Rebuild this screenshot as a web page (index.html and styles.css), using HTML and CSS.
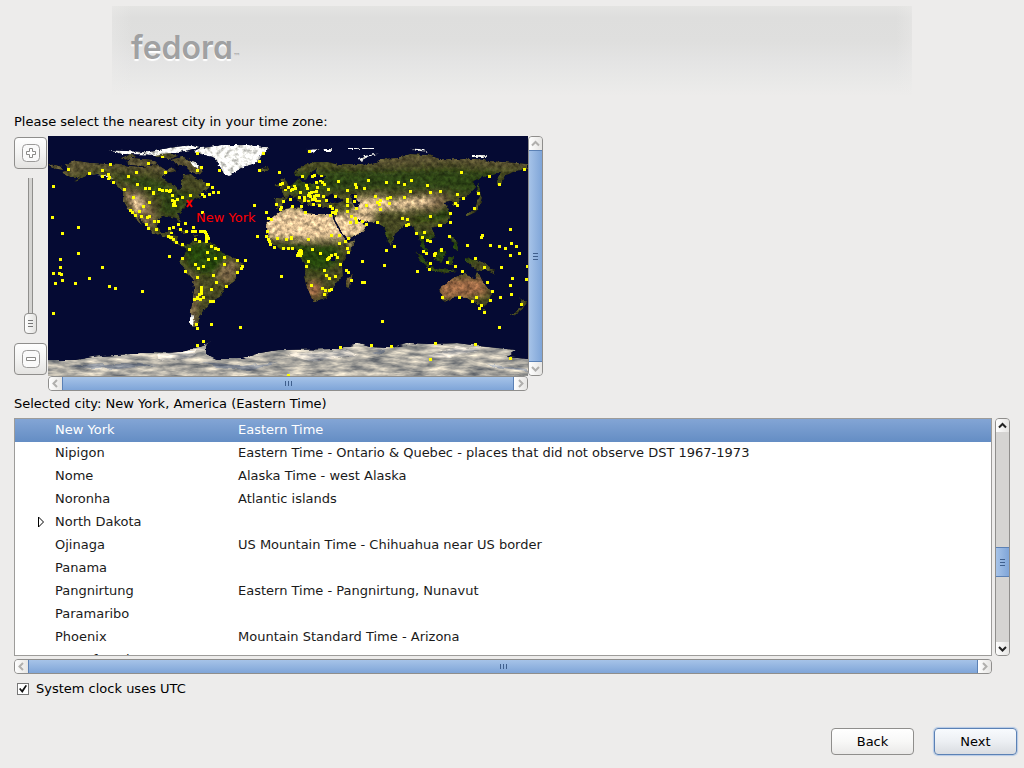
FILE: index.html
```
<!DOCTYPE html>
<html lang="en">
<head>
<meta charset="utf-8">
<title>Time zone selection</title>
<link rel="stylesheet" href="styles.css">
</head>
<body>
<header class="banner"><div class="logo">fedora<span class="tm">™</span></div></header>

<main class="content">
  <p class="caption">Please select the nearest city in your time zone:</p>

  <section class="map-panel" aria-label="Map">
    <div class="zoom">
      <button class="zoom-btn" type="button" aria-label="Zoom in">
        <svg width="18" height="18" viewBox="0 0 18 18"><rect class="ico-box" x=".5" y=".5" width="17" height="17" rx="4"/><path class="ico-sign" d="M7.500 4.500h3v3h3v3h-3v3h-3v-3h-3v-3h3z"/></svg>
      </button>
      <input class="zoom-range" type="range" min="0" max="10" value="0" aria-label="Zoom level">
      <button class="zoom-btn" type="button" aria-label="Zoom out">
        <svg width="18" height="18" viewBox="0 0 18 18"><rect class="ico-box" x=".5" y=".5" width="17" height="17" rx="4"/><path class="ico-sign" d="M4.500 7.500h9v3h-9z"/></svg>
      </button>
    </div>

    <div class="map-grid">
      <svg class="map" viewBox="0 0 480 240" role="img" aria-label="World map, New York selected">
        <defs>
          <filter id="terrain" x="0" y="0" width="480" height="240" filterUnits="userSpaceOnUse" color-interpolation-filters="sRGB">
            <feTurbulence type="fractalNoise" baseFrequency=".22" numOctaves="4" seed="7" result="n"/>
            <feDisplacementMap in="SourceGraphic" in2="n" scale="4" xChannelSelector="R" yChannelSelector="G" result="land"/>
            <feColorMatrix in="n" type="matrix" values="1.1 0 0 0 -.08  1.1 0 0 0 -.08  1.100 0 0 0 -.1  0 0 0 0 1" result="grey"/>
            <feComposite in="land" in2="grey" operator="arithmetic" k1="1" k2=".5" result="lit"/>
            <feComposite in="lit" in2="land" operator="in"/>
          </filter>
          <filter id="ice" x="-10" y="195" width="500" height="60" filterUnits="userSpaceOnUse" color-interpolation-filters="sRGB">
            <feTurbulence type="fractalNoise" baseFrequency=".05 .22" numOctaves="4" seed="3" result="n"/>
            <feDisplacementMap in="SourceGraphic" in2="n" scale="5" xChannelSelector="R" yChannelSelector="G" result="land"/>
            <feColorMatrix in="n" type="matrix" values="1.3 0 0 0 -.18  1.2 0 0 0 -.12  1 0 0 0 -.02  0 0 0 0 1" result="grey"/>
            <feComposite in="land" in2="grey" operator="arithmetic" k1="1" k2=".5" result="lit"/>
            <feComposite in="lit" in2="land" operator="in"/>
          </filter>
          <filter id="soft" x="-20%" y="-20%" width="140%" height="140%"><feGaussianBlur stdDeviation="3"/></filter>
          <clipPath id="land">
            <path id="namerica" d="M14 36L20 34L17 28L28 25L43 27L73 29L93 31L110 29L118 34L124 31L128 35L120 37L114 41L118 45L127 49L131 54L134 51L133 45L136 39L143 38L148 42L155 44L162 51L158 55L150 58L154 61L148 63L141 66L136 72L130 79L134 86L132 87L128 82L118 80L110 83L109 91L113 96L119 96L125 92L123 99L130 100L129 106L134 110L139 108L137 112L128 108L118 101L105 97L99 91L94 85L90 80L94 89L90 86L86 79L80 73L75 64L75 55L66 47L60 42L50 38L41 39L32 43L25 46L31 41L22 41Z"/>
            <path id="arctic" d="M78 26L84 22L96 23L106 24L110 28L98 30L82 29ZM73 22L82 18L88 20L79 24ZM104 17L118 15L130 20L122 23L108 20ZM124 23L136 21L148 27L156 34L151 39L144 36L138 30L128 28ZM0 28L12 30L15 34L4 32Z"/>
            <path id="samerica" d="M138 110L145 104L152 105L167 108L173 116L189 123L195 128L190 137L187 145L177 152L172 161L163 166L155 176L151 184L149 193L142 189L143 174L146 154L145 144L137 136L132 126L137 117Z"/>
            <path id="eurasia" d="M228 72L227 62L236 62L234 55L245 48L251 42L255 47L269 47L279 40L267 39L270 32L262 37L258 44L254 41L247 40L246 36L256 29L266 26L280 26L292 29L312 29L329 27L333 23L350 22L362 18L380 19L392 23L428 23L442 25L480 28L480 33L468 35L458 39L453 48L449 49L449 42L453 37L435 41L424 45L428 51L419 61L412 62L411 70L406 69L403 65L396 66L400 71L403 80L400 86L391 90L384 92L387 100L380 106L375 100L376 108L380 117L374 112L370 98L366 95L363 89L357 90L347 98L344 110L340 106L337 93L332 87L319 86L308 82L312 86L319 89L315 96L300 103L294 96L287 84L286 75L287 71L270 71L267 66L264 63L264 70L261 70L256 61L250 59L257 66L254 69L248 62L242 60L236 64L234 71Z"/>
            <path id="africa" d="M235 73L252 71L259 77L267 78L283 78L287 87L295 100L300 106L308 104L303 113L294 126L295 140L285 152L278 162L265 166L258 149L256 141L258 129L250 119L248 113L232 113L223 107L218 97L218 88L227 80Z"/>
            <path id="islands" d="M305 137L302 153L298 151L298 144ZM232 53L235 48L232 43L237 42L242 52ZM226 50L231 46L231 51ZM210 33L219 31L221 34L213 36ZM417 80L421 76L427 73L429 65L432 60L428 57L432 56L434 62L430 75L420 80ZM430 46L432 54L429 59ZM367 114L374 120L382 130L379 132L371 123ZM385 118L392 113L398 116L394 126L387 124ZM382 131L400 134L410 135L398 137L382 134ZM400 121L406 120L405 129L401 128ZM417 122L433 125L444 132L448 138L438 134L429 135L420 128ZM402 100L408 103L410 114L406 112ZM128 93L144 96L137 98ZM145 98L153 99L146 101ZM468 175L477 168L475 173L466 180L462 180L467 177ZM472 162L479 167L476 171ZM434 173L438 173L436 177Z"/>
            <path id="australia" d="M391 152L405 142L412 139L419 136L423 142L427 144L430 135L434 144L444 156L442 164L435 170L425 166L417 161L405 162L397 166L394 164Z"/>
          </clipPath>
        </defs>

        <rect class="sea" width="480" height="240"/>

        <g filter="url(#terrain)">
          <g clip-path="url(#land)">
            <rect class="t-green" width="480" height="240"/>
            <g filter="url(#soft)">
              <path class="t-tundra" d="M0 20H160V40L130 38L90 34L50 32L20 40L0 36ZM280 18H480V32L440 30L400 27L340 30L290 28Z"/>
              <path class="t-boreal" d="M245 38L290 34L340 35L400 33L450 36L450 48L420 58L400 54L330 52L280 56L240 58ZM60 38L100 42L118 48L130 56L150 58L140 68L128 80L112 78L116 62L90 50Z"/>
              <path class="t-rock" d="M78 52L90 56L102 66L108 80L104 96L84 78L76 64ZM142 134L148 144L150 170L148 192L140 190L142 160ZM165 126L190 124L188 143L176 148L168 140ZM350 62L396 58L402 66L390 74L360 72Z"/>
              <path class="t-sand" d="M215 78L240 72L290 78L298 103L270 104L216 101ZM286 76L320 84L316 98L298 102ZM298 76L326 78L326 86L312 86ZM308 63L336 60L346 72L318 77L304 72ZM336 66L360 63L386 61L384 67L360 74L340 73ZM86 60L92 60L96 70L92 76L85 68ZM300 108L308 104L302 114Z"/>
              <path class="t-jungle" d="M220 108L290 110L292 124L276 136L258 132L248 116ZM134 112L152 106L172 112L180 122L168 138L146 136L138 124ZM364 88L372 84L396 84L402 78L398 70L386 78L366 82ZM366 96L450 112L420 126L370 130ZM330 88L338 96L344 108L338 108ZM382 131H412V138H382Z"/>
              <path class="t-red" d="M388 142H436L440 158L420 161L392 162ZM258 146L272 146L274 158L262 164ZM298 138L304 138L300 152Z"/>
            </g>
          </g>
          <path class="lake" d="M277 62L283 58L288 60L296 64L290 67L279 66ZM303 58L309 57L308 63L312 69L308 73L304 66ZM127 59L133 60L136 65L132 62ZM283 120h4v5h-4zM126 28l6 4-3 3z"/>
          <path class="snow" d="M152 12L175 9L200 9L220 11L219 15L213 20L208 27L196 31L187 36L182 40L176 38L171 29L165 21L152 18L144 16ZM96 17L110 14L126 11L145 9L152 11L138 15L124 17L108 18ZM142 24L152 29L150 33L144 28ZM40 38L55 40L66 43L60 40ZM256 14L272 13L264 17ZM275 13H283V15H277ZM300 12H326V13H300ZM310 24L316 20L332 17L320 21L313 25ZM362 12L372 13L382 16L368 15ZM424 19H438V21H424ZM142 178L146 180L145 191L142 187ZM60 14L98 16L112 19L74 18Z"/>
        </g>

        <g filter="url(#ice)">
          <path class="antarctica" d="M-10 224L27 224L50 220L83 218L103 216L133 217L147 212L160 207L167 202L158 209L158 218L169 223L195 223L212 217L229 214L285 213L312 208L322 211L342 212L362 207L382 208L409 207L432 210L468 214L459 221L490 224V255H-10Z"/>
          <path class="ice-shade" d="M20 231L70 227L110 229L70 233ZM155 226L195 230L230 226L200 234L170 232ZM324 216L338 212L332 219ZM440 228L480 233V236L448 232Z"/>
          <path class="ice-light" d="M110 218L150 214L140 222L112 224ZM380 220L410 210L430 214L402 222ZM240 218L300 214L310 220L260 225Z"/>
        </g>

        <g class="cities">
          <g transform="scale(.33333)">
            <path d="M61 101zM187 86zM163 104zM124 113zM163 121zM182 116zM182 129zM184 124zM196 140zM241 122zM265 110zM301 83zM343 63zM352 110zM448 52zM448 104zM460 95zM16 152zM13 245zM43 293zM91 275zM91 353zM229 161zM256 185zM268 146zM292 158zM304 158zM316 170zM317 173zM334 161zM343 163zM355 163zM364 166zM367 164zM304 200zM286 212zM373 179zM373 194zM388 191zM403 185zM427 179zM376 206zM379 203zM382 210zM379 197zM376 209zM463 176zM469 182zM478 146zM248 224zM254 230zM262 239zM274 227zM280 242zM298 245zM305 242zM295 266zM301 278zM319 257zM331 257zM325 281zM391 266zM364 278zM376 275zM397 281zM412 262zM436 275zM415 287zM434 287zM442 287zM370 291zM361 302zM370 303zM367 305zM376 311zM385 320zM403 326zM424 341zM442 311zM454 317zM458 287zM463 287zM469 287zM472 289zM475 294zM476 300zM475 307zM475 313zM463 230zM477 350zM364 360z"/>
          </g>
          <g transform="translate(152) scale(.33333)">
            <path d="M190 53zM178 77zM178 103zM58 104zM5 95zM238 110zM328 47zM25 146zM37 155zM7 176zM13 182zM29 176zM40 170zM55 170zM163 209zM7 230zM0 287zM7 287zM14 287zM20 294zM22 302zM26 308zM20 316zM34 332zM46 338zM56 341zM22 350zM241 146zM247 143zM256 162zM265 154zM273 164zM277 161zM283 150zM286 158zM301 170zM307 122zM319 149zM322 158zM337 122zM343 119zM349 140zM365 120zM361 135zM367 140zM373 146zM352 155zM349 167zM340 168zM334 170zM328 172zM325 179zM331 182zM343 182zM349 179zM355 179zM337 191zM346 191zM349 195zM340 205zM325 195zM358 195zM313 185zM313 194zM298 185zM271 191zM230 206zM250 197zM244 215zM241 220zM277 211zM304 212zM316 230zM358 208zM370 182zM385 161zM379 194zM391 212zM406 182zM415 137zM442 164zM466 146zM469 155zM442 191zM442 197zM442 209zM469 218zM442 227zM397 218zM409 224zM406 229zM406 233zM397 230zM391 239zM454 242zM466 248zM451 260zM469 260zM199 230zM205 248zM214 251zM202 287zM172 302zM199 302zM205 311zM208 317zM211 325zM223 335zM250 338zM265 338zM259 311zM274 304zM274 308zM277 337zM232 308zM301 344zM295 353zM304 353zM325 311zM337 341zM361 353zM394 299zM418 299zM418 323zM436 317zM445 308zM442 338zM406 356z"/>
          </g>
          <g transform="translate(302) scale(.33333)">
            <path d="M16 146zM19 155zM43 158zM55 134zM109 140zM145 140zM163 146zM184 134zM232 149zM334 110zM418 122zM448 146zM523 101zM16 182zM13 197zM19 218zM76 182zM91 194zM82 200zM88 206zM91 221zM112 187zM121 185zM118 203zM163 185zM181 167zM241 170zM271 167zM322 176zM340 188zM316 203zM322 209zM373 218zM385 173zM301 233zM301 260zM268 269zM272 268zM241 242zM157 248zM172 251zM169 269zM175 266zM199 293zM223 290zM217 305zM232 314zM241 317zM298 302zM82 260zM49 266zM49 209zM37 257zM19 257zM4 242zM2 260zM109 344zM133 332zM220 347zM229 353zM253 356zM257 353zM274 341zM352 329zM394 305zM397 299zM421 329zM448 332zM466 338zM484 323zM499 332zM481 281zM508 353zM481 358z"/>
          </g>
          <g transform="translate(0 114) scale(.33333)">
            <path d="M91 11zM37 29zM37 53zM16 71zM34 71zM40 74zM43 92zM22 101zM82 101zM124 86zM163 53zM184 110zM202 116zM283 125zM16 191zM364 20zM424 0zM403 26zM412 65zM442 44zM451 56zM466 50zM478 8zM448 83zM460 113zM460 119zM460 125zM460 131zM454 134zM448 143zM448 146zM440 149zM457 149zM466 143zM445 224zM448 236zM466 275zM448 287z"/>
          </g>
          <g transform="translate(152 114) scale(.33333)">
            <path d="M22 8zM25 29zM46 26zM73 23zM73 44zM10 50zM112 32zM136 32zM127 50zM124 56zM112 68zM40 77zM49 98zM79 110zM34 119zM3 113zM3 122zM3 131zM10 143zM31 155zM40 155zM34 224zM121 233zM10 275zM244 80zM298 3zM304 3zM292 17zM301 17zM337 0zM319 50zM325 35zM394 17zM388 23zM385 26zM382 29zM412 23zM421 44zM445 8zM439 62zM445 68zM454 92zM406 80zM373 62zM379 77zM388 86zM334 107zM367 116zM376 122zM388 122zM394 119zM373 134zM421 293zM265 376z"/>
          </g>
          <g transform="translate(302 114) scale(.33333)">
            <path d="M109 2zM37 35zM103 47zM38 98zM43 98zM202 65zM238 59zM241 41zM220 5zM229 11zM253 17zM257 11zM274 2zM292 38zM316 50zM337 65zM376 26zM403 53zM454 53zM412 98zM427 125zM421 152zM394 167zM388 176zM403 188zM379 143zM367 155zM328 143zM277 143zM451 143zM484 134zM481 107zM487 86zM529 89zM531 50zM481 17zM508 11zM514 164zM448 233zM97 215zM64 287zM124 290zM256 281zM376 284zM241 329zM481 326z"/>
          </g>
        </g>
        <path class="marker" d="M139 64l5 7m0-7l-5 7"/>
        <text class="marker-label" x="148" y="86">New York</text>
      </svg>

      <div class="bar bar-v" aria-label="Map vertical scroll">
        <button class="bar-btn" type="button" aria-label="Scroll up" disabled><svg width="9" height="9" viewBox="0 0 9 9"><path d="M1 6.500L4.500 3L8 6.500"/></svg></button>
        <div class="track"><div class="thumb"></div></div>
        <button class="bar-btn" type="button" aria-label="Scroll down" disabled><svg width="9" height="9" viewBox="0 0 9 9"><path d="M1 3L4.500 6.500L8 3"/></svg></button>
      </div>
      <div class="bar bar-h" aria-label="Map horizontal scroll">
        <button class="bar-btn" type="button" aria-label="Scroll left" disabled><svg width="9" height="9" viewBox="0 0 9 9"><path d="M6 1L2.500 4.500L6 8"/></svg></button>
        <div class="track"><div class="thumb"></div></div>
        <button class="bar-btn" type="button" aria-label="Scroll right" disabled><svg width="9" height="9" viewBox="0 0 9 9"><path d="M3 1L6.500 4.500L3 8"/></svg></button>
      </div>
    </div>
  </section>

  <p class="caption">Selected city: New York, America (Eastern Time)</p>

  <section class="list-grid" aria-label="Cities">
    <div class="list">
      <table class="cities-table">
        <colgroup><col class="col-city"><col></colgroup>
        <tbody>
          <tr class="selected"><td>New York</td><td>Eastern Time</td></tr>
          <tr><td>Nipigon</td><td>Eastern Time - Ontario &amp; Quebec - places that did not observe DST 1967-1973</td></tr>
          <tr><td>Nome</td><td>Alaska Time - west Alaska</td></tr>
          <tr><td>Noronha</td><td>Atlantic islands</td></tr>
          <tr><td class="parent"><button class="expander" type="button" aria-label="Expand North Dakota"><svg width="8" height="12" viewBox="0 0 8 12"><path d="M1.500 1L6.500 6L1.500 11Z"/></svg></button>North Dakota</td><td></td></tr>
          <tr><td>Ojinaga</td><td>US Mountain Time - Chihuahua near US border</td></tr>
          <tr><td>Panama</td><td></td></tr>
          <tr><td>Pangnirtung</td><td>Eastern Time - Pangnirtung, Nunavut</td></tr>
          <tr><td>Paramaribo</td><td></td></tr>
          <tr><td>Phoenix</td><td>Mountain Standard Time - Arizona</td></tr>
          <tr><td>Port of Spain</td><td></td></tr>
        </tbody>
      </table>
    </div>
    <div class="bar bar-v">
      <button class="bar-btn" type="button" aria-label="Scroll list up"><svg width="9" height="9" viewBox="0 0 9 9"><path d="M1 6.500L4.500 3L8 6.500"/></svg></button>
      <div class="track"><div class="thumb thumb-short"></div></div>
      <button class="bar-btn" type="button" aria-label="Scroll list down"><svg width="9" height="9" viewBox="0 0 9 9"><path d="M1 3L4.500 6.500L8 3"/></svg></button>
    </div>
    <div class="bar bar-h">
      <button class="bar-btn" type="button" aria-label="Scroll list left" disabled><svg width="9" height="9" viewBox="0 0 9 9"><path d="M6 1L2.500 4.500L6 8"/></svg></button>
      <div class="track"><div class="thumb"></div></div>
      <button class="bar-btn" type="button" aria-label="Scroll list right" disabled><svg width="9" height="9" viewBox="0 0 9 9"><path d="M3 1L6.500 4.500L3 8"/></svg></button>
    </div>
  </section>

  <label class="utc"><input class="check" type="checkbox" checked>System clock uses UTC</label>
</main>

<footer class="actions">
  <button class="btn" type="button">Back</button>
  <button class="btn btn-default" type="button">Next</button>
</footer>
</body>
</html>
```

FILE: styles.css
```
* { box-sizing: border-box; }

body {
  margin: 0;
  min-height: 100vh;
  padding-top: 6px;
  display: flex;
  flex-direction: column;
  background: #edeceb;
  color: #000;
  font: 13px/18px "DejaVu Sans", sans-serif;
}

button { font: inherit; color: inherit; padding: 0; }

.banner {
  width: 100%;
  max-width: 800px;
  height: 90px;
  margin: 0 auto 17px;
  padding: 20px 19px;
  background:
    linear-gradient(to right, rgba(237, 236, 235, .4), rgba(237, 236, 235, 0) 20px calc(100% - 16px), rgba(237, 236, 235, .4)),
    linear-gradient(#e4e4e2, #dededd 12px, #dfdfde 36px, #e4e4e4 56px, #e9e9e8 76px, #edeceb);
}

.logo {
  display: flex;
  align-items: baseline;
  font: 600 32px/44px Inter, "DejaVu Sans", sans-serif;
  font-feature-settings: "cv11";
  color: #a0a1a2;
  text-shadow: 0 2px 1px #fff;
}

.tm { font: 8px/8px "DejaVu Sans", sans-serif; text-shadow: none; }

.content {
  flex: 1;
  display: flex;
  flex-direction: column;
  padding: 0 14px;
}

.caption { margin: 0; }

.map-panel {
  display: flex;
  gap: 1px;
  margin: 5px 0 4px;
}

.zoom {
  width: 33px;
  display: flex;
  flex-direction: column;
  align-items: center;
  padding: 1px 0 16px;
}

.zoom-btn {
  width: 33px;
  height: 32px;
  display: grid;
  place-items: center;
  border: 1px solid #8f8e8c;
  border-radius: 4px;
  background: linear-gradient(#fefefe, #f4f4f3 50%, #e4e3e1);
}

.ico-box { fill: #fafafa; stroke: #9b9a99; }
.ico-sign { fill: #fff; stroke: #8b8a88; }

.zoom-range {
  appearance: none;
  writing-mode: vertical-lr;
  direction: rtl;
  flex: 1;
  min-height: 0;
  width: 13px;
  margin: 9px 0;
  background: linear-gradient(to right, transparent 4px, #8f8e8c 4px 5px, #d4d3d1 5px 8px, #8f8e8c 8px 9px, transparent 9px);
}

.zoom-range::-webkit-slider-thumb {
  appearance: none;
  width: 13px;
  height: 21px;
  border: 1px solid #8f8e8c;
  border-radius: 4px;
  background:
    linear-gradient(#777 1px, transparent 1px) 3px 6px / 5px 3px no-repeat,
    linear-gradient(#777 1px, transparent 1px) 3px 9px / 5px 3px no-repeat,
    linear-gradient(#777 1px, transparent 1px) 3px 12px / 5px 3px no-repeat,
    linear-gradient(to right, #fff, #e2e1df);
}

.map-grid {
  display: grid;
  grid-template-columns: 480px 15px;
  grid-template-rows: 240px 15px;
}

.map { display: block; width: 100%; height: 100%; }

.sea { fill: #050a33; }
.t-green { fill: #484a24; }
.t-tundra { fill: #5d5536; }
.t-boreal { fill: #2f4414; }
.t-rock { fill: #7d6848; }
.t-sand { fill: #eccba0; }
.t-jungle { fill: #28470f; }
.t-red { fill: #a06c48; }
.lake { fill: #050a33; }
.snow { fill: #fff; }
.antarctica { fill: #b3aea6; }
.ice-shade { fill: #8a8f9a; }
.ice-light { fill: #dcd4cb; }

.cities {
  fill: none;
  stroke: #ff0;
  stroke-width: 8px;
  stroke-linecap: square;
  shape-rendering: crispEdges;
}

.marker { fill: none; stroke: #f00; stroke-width: 2px; }
.marker-label { fill: #f00; font-size: 13px; }

.list-grid {
  flex: 1;
  min-height: 256px;
  display: grid;
  grid-template-columns: 1fr 15px;
  grid-template-rows: 1fr 15px;
  gap: 3px;
  margin-top: 5px;
}

.list {
  height: 0;
  min-height: 100%;
  overflow: hidden;
  border: 1px solid #9d9c9a;
  background: #fff;
  color: #1a1a1a;
}

.cities-table {
  width: 100%;
  border-collapse: collapse;
  table-layout: fixed;
}

.col-city { width: 221px; }

.cities-table td { height: 23px; padding: 0 2px 2px; white-space: nowrap; }
.cities-table td:first-child { padding-left: 40px; }
.cities-table .parent:first-child { padding-left: 22px; }
.selected { background: linear-gradient(#83a5d5, #648dc4); color: #fff; }

.expander {
  width: 18px;
  height: 12px;
  border: 0;
  background: none;
  text-align: left;
  line-height: 0;
  vertical-align: -2px;
}

.expander path { fill: #fff; stroke: #000; }

.bar {
  display: flex;
  border: 1px solid #8f8e8c;
  border-radius: 4px;
  overflow: hidden;
  background: #d5d4d2;
}

.bar-v { flex-direction: column; }

.bar-btn {
  flex: none;
  width: 13px;
  height: 13px;
  display: grid;
  place-items: center;
  border: 0;
  background: linear-gradient(to right, #fefefe, #e6e5e3);
}

.bar-btn path { fill: none; stroke: #222; stroke-width: 2px; }
.bar-btn:disabled path { stroke: #b0afad; }

.track { flex: 1; display: flex; flex-direction: inherit; }

.thumb {
  flex: 1;
  border: 1px solid #5b81b5;
}

.bar-v .thumb {
  border-width: 1px 0;
  background:
    repeating-linear-gradient(#3f5f8d 0 1px, transparent 1px 3px) center / 5px 7px no-repeat,
    linear-gradient(to right, #a6c3e8, #7fa5d8);
}

.bar-h .thumb {
  border-width: 0 1px;
  background:
    repeating-linear-gradient(to right, #3f5f8d 0 1px, transparent 1px 3px) center / 7px 5px no-repeat,
    linear-gradient(#a6c3e8, #7fa5d8);
}

.track:has(.thumb-short)::before { content: ""; flex: 115; }
.track:has(.thumb-short)::after { content: ""; flex: 65; }
.bar .thumb-short { flex: 0 0 30px; }

.utc {
  display: flex;
  align-items: center;
  align-self: flex-start;
  gap: 7px;
  margin-top: 6px;
}

.check {
  appearance: none;
  width: 12px;
  height: 12px;
  margin: 0 0 0 3px;
  border: 1px solid #777;
  background: #fff;
  display: grid;
  place-items: center;
}

.check:checked::before {
  content: "";
  width: 8px;
  height: 8px;
  background: #111;
  clip-path: polygon(0 50%, 18% 36%, 38% 62%, 82% 0, 100% 10%, 42% 100%);
}

.actions {
  display: flex;
  justify-content: flex-end;
  gap: 20px;
  padding: 30px 7px 13px;
}

.btn {
  width: 83px;
  height: 27px;
  border: 1px solid #8f8e8c;
  border-radius: 4px;
  background: linear-gradient(#fff, #f8f8f7 50%, #eae9e8);
}

.btn-default {
  border-color: #5b81b5;
  background: linear-gradient(#f8fbfe, #eceff3 50%, #d9dce1);
  box-shadow: 0 0 1px 1px #b5cae6;
}
```
